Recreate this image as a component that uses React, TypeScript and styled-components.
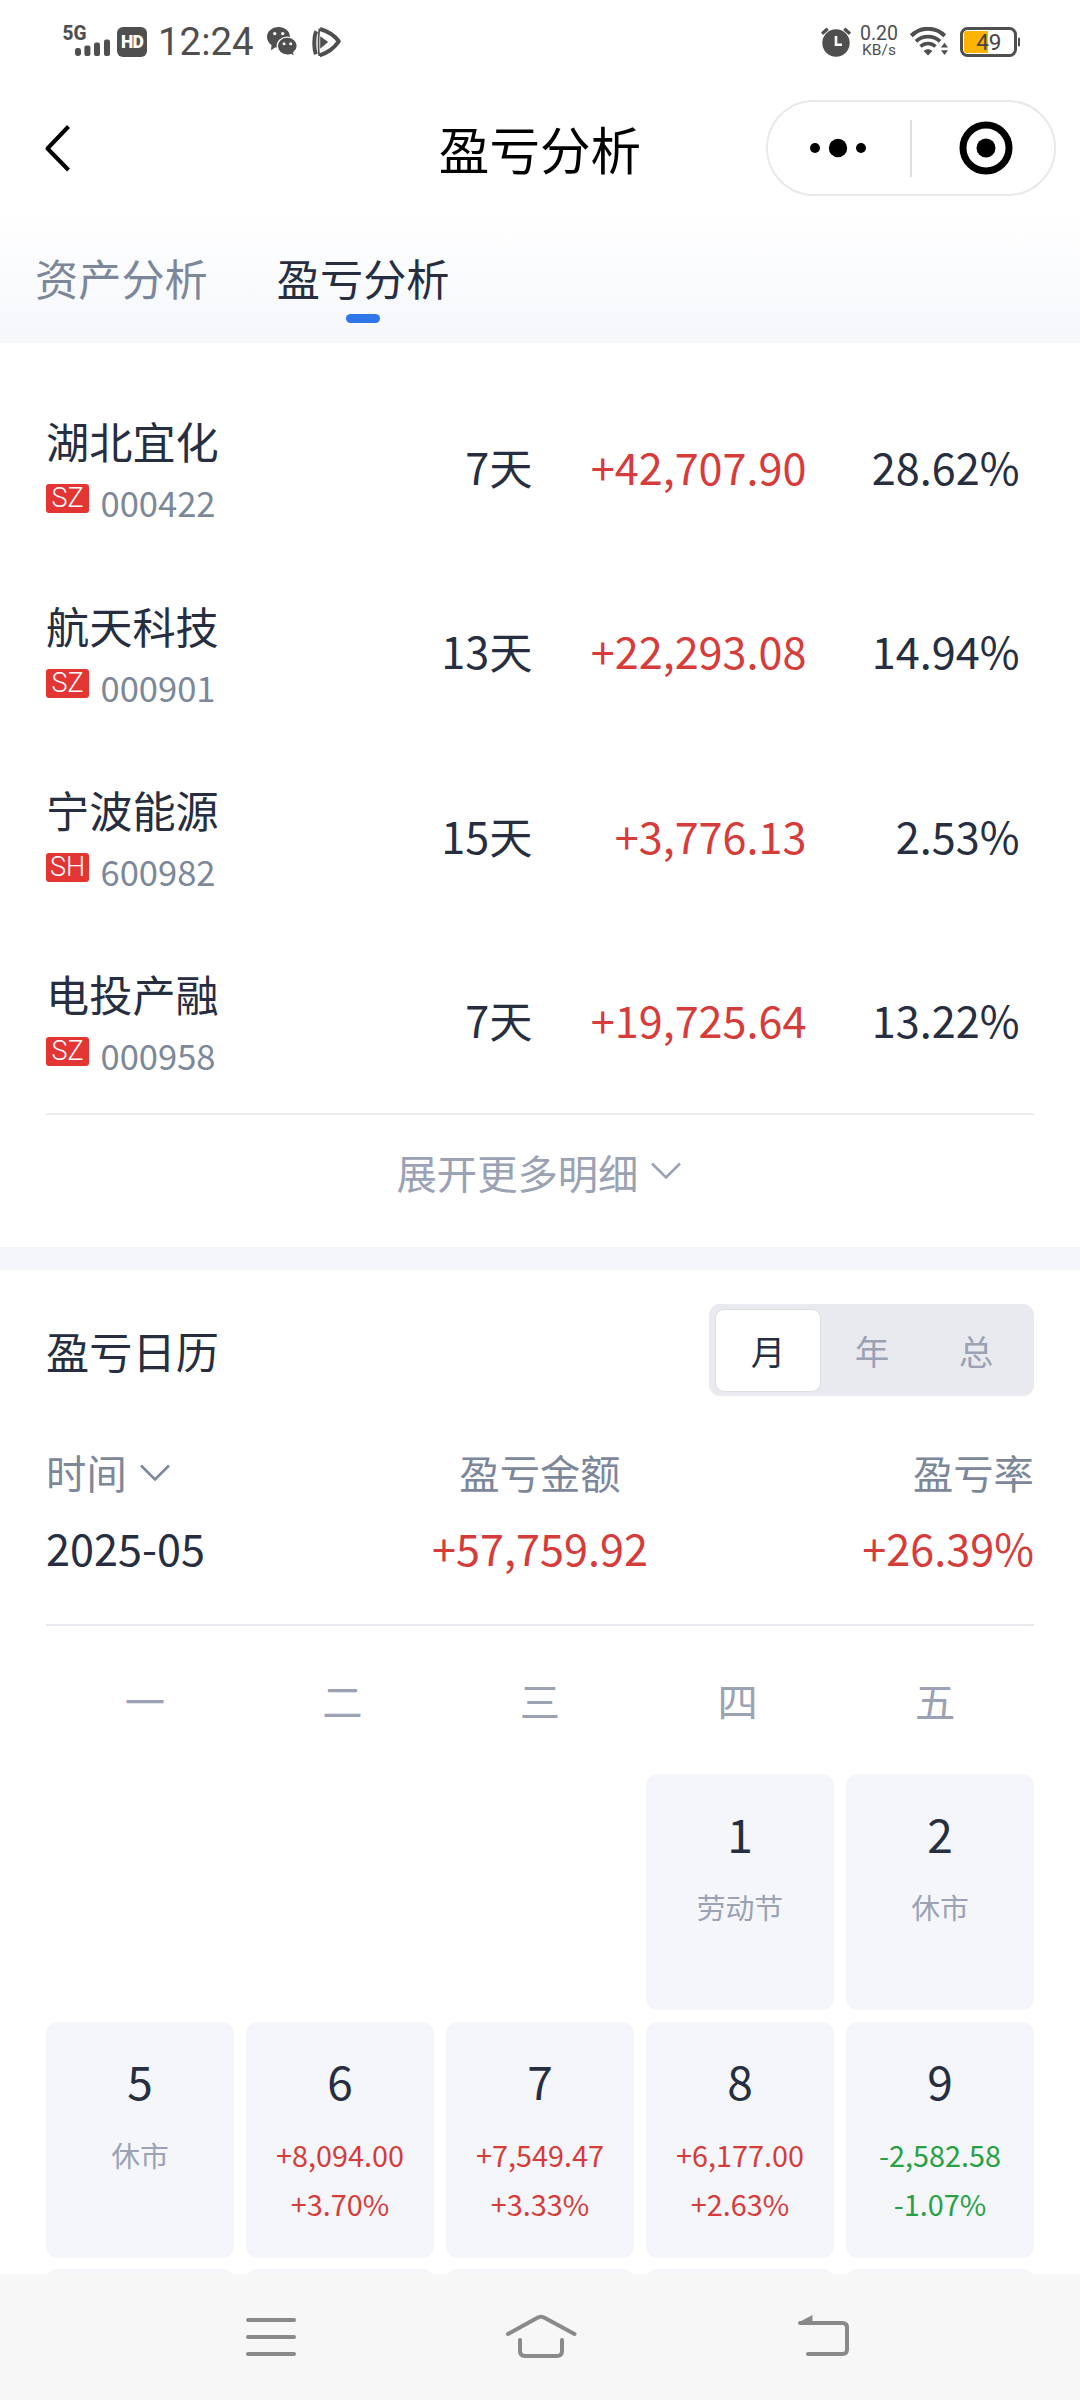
import React from 'react';
import styled, { createGlobalStyle } from 'styled-components';

const INK = '#262e3f';
const SLATE = '#7d879a';
const MUTED = '#9aa2b4';
const UP = '#d53c3a';
const DOWN = '#26a144';
const STATUS = '#4f4f4f';

const GlobalStyle = createGlobalStyle`
  html, body { margin: 0; padding: 0; background: #fff; }
  * { box-sizing: border-box; }
  body { font-family: "Noto Sans CJK SC", "Noto Sans", sans-serif; font-weight: 400; color: ${INK}; }
`;

const Screen = styled.div`
  width: 1080px;
  height: 2400px;
  display: flex;
  flex-direction: column;
  overflow: hidden;
  background: #fff;
`;

const StatusBar = styled.header`
  flex: none;
  height: 84px;
  padding: 0 60px 0 60px;
  display: flex;
  justify-content: space-between;
  align-items: center;
  font-family: Roboto, "Liberation Sans", sans-serif;
  color: ${STATUS};
  svg { display: block; font-family: Roboto, "Liberation Sans", sans-serif; }
`;

const StatusGroup = styled.div<{ $offset?: number }>`
  display: flex;
  align-items: center;
  margin-left: ${(p) => p.$offset ?? 0}px;
`;

const HdBadge = styled.span`
  width: 30px;
  height: 30px;
  margin-left: 7px;
  border-radius: 6px;
  background: ${STATUS};
  color: #fff;
  font-size: 17.5px;
  font-weight: 900;
  line-height: 31px;
  text-align: center;
  letter-spacing: -0.8px;
`;

const Clock = styled.time`
  margin: 0 12px 0 11px;
  width: 97px;
  font-size: 38.4px;
  line-height: 38px;
`;

const NetSpeed = styled.div`
  width: 38px;
  margin: 0 12px 0 8px;
  display: flex;
  flex-direction: column;
  align-items: center;
`;

const SpeedValue = styled.span`
  font-size: 19.5px;
  line-height: 16px;
`;

const SpeedUnit = styled.span`
  font-size: 15.5px;
  line-height: 17px;
`;

const TitleBar = styled.div`
  flex: none;
  height: 128px;
  padding: 0 24px 0 44px;
  display: grid;
  grid-template-columns: 1fr auto 1fr;
  align-items: center;
`;

const PageTitle = styled.h1`
  margin: 0;
  padding-right: 20px;
  font-size: 50.6px;
  line-height: 70px;
  font-weight: 400;
  color: #000;
`;

const Capsule = styled.div`
  justify-self: end;
  width: 290px;
  height: 96px;
  border: 2px solid #e9e9e9;
  border-radius: 48px;
  display: grid;
  grid-template-columns: 142px 2px 142px;
  align-items: center;
`;

const CapsuleButton = styled.button<{ $shift: string }>`
  height: 100%;
  padding: ${(p) => p.$shift};
  border: 0;
  background: none;
  display: flex;
  align-items: center;
  justify-content: center;
`;

const CapsuleDivider = styled.span`
  width: 2px;
  height: 57px;
  background: #dedede;
`;

const BackButton = styled.button`
  justify-self: start;
  padding: 0;
  border: 0;
  background: none;
  display: flex;
`;

const Tabs = styled.nav`
  flex: none;
  height: 131px;
  padding: 34.5px 35px 0;
  display: flex;
  gap: 69px;
  background: linear-gradient(#ffffff, #f5f7fb);
`;

const Tab = styled.div<{ $active?: boolean }>`
  display: flex;
  flex-direction: column;
  align-items: center;
  font-size: 43.2px;
  line-height: 60px;
  color: ${(p) => (p.$active ? INK : SLATE)};
  &::after {
    content: "";
    width: 34px;
    height: 9px;
    margin-top: 7.5px;
    border-radius: 4.5px;
    background: ${(p) => (p.$active ? '#2f76e8' : 'transparent')};
  }
`;

const Body = styled.main`
  flex: 1;
  min-height: 0;
  overflow: hidden;
`;

const Holdings = styled.section`
  height: 904px;
  padding: 31.4px 46px 0;
`;

const HoldingRow = styled.div`
  height: 184.32px;
  display: grid;
  grid-template-columns: 240px 246.5px 274px 213px;
  align-items: start;
`;

const Stock = styled.div`
  padding-top: 36px;
`;

const StockName = styled.div`
  font-size: 43.2px;
  line-height: 60px;
`;

const StockMeta = styled.div`
  height: 64px;
  display: flex;
  align-items: center;
`;

const MarketTag = styled.span`
  width: 43px;
  height: 29px;
  margin: 0 11.5px 7px 0;
  border-radius: 3px;
  background: #e33534;
  color: #fff;
  font-family: Roboto, "Liberation Sans", sans-serif;
  font-size: 27px;
  font-weight: 350;
  line-height: 29px;
  text-align: center;
`;

const StockCode = styled.span`
  font-size: 34.56px;
  line-height: 50px;
  color: ${SLATE};
`;

const Figure = styled.div<{ $color?: string }>`
  padding-top: 61.6px;
  text-align: right;
  font-size: 43.2px;
  line-height: 60px;
  color: ${(p) => p.$color ?? INK};
`;

const Rule = styled.div<{ $color: string; $gap?: number }>`
  height: 2px;
  margin-top: ${(p) => p.$gap ?? 0}px;
  background: ${(p) => p.$color};
`;

const ExpandButton = styled.div`
  padding-top: 29px;
  display: flex;
  justify-content: center;
  align-items: flex-start;
  gap: 13px;
  padding-right: 2px;
  font-size: 40.32px;
  line-height: 56px;
  color: ${MUTED};
  svg { margin-top: 18.5px; }
`;

const Band = styled.div`
  height: 23px;
  background: #f4f6fa;
`;

const CalendarSection = styled.section`
  padding: 34px 46.08px 0;
`;

const SectionHead = styled.div`
  display: flex;
  justify-content: space-between;
  align-items: center;
`;

const SectionTitle = styled.h2`
  margin: 0;
  font-size: 43.2px;
  line-height: 60px;
  font-weight: 400;
`;

const Segmented = styled.div`
  width: 325px;
  height: 92px;
  padding: 5.5px 6px 5.5px 7px;
  border-radius: 11px;
  background: #e9eaf0;
  display: flex;
`;

const Segment = styled.span<{ $active?: boolean }>`
  flex: 1;
  height: 81px;
  border-radius: 8px;
  background: ${(p) => (p.$active ? '#fff' : 'transparent')};
  box-shadow: ${(p) => (p.$active ? '0 0 0 1px #dddee4' : 'none')};
  color: ${(p) => (p.$active ? INK : MUTED)};
  font-size: 34.56px;
  line-height: 81px;
  text-align: center;
`;

const Summary = styled.div`
  margin: 47.6px 0 46.8px;
  display: grid;
  grid-template-columns: 1fr 1fr 1fr;
  row-gap: 17.6px;
`;

const SummaryLabel = styled.div<{ $align: string }>`
  display: flex;
  justify-content: ${(p) => p.$align};
  gap: 13px;
  font-size: 40.32px;
  line-height: 56px;
  color: ${SLATE};
  svg { margin-top: 20px; }
`;

const SummaryValue = styled.div<{ $align: string; $color?: string }>`
  display: flex;
  justify-content: ${(p) => p.$align};
  font-size: 43.2px;
  line-height: 60px;
  color: ${(p) => p.$color ?? INK};
`;

const Weekdays = styled.div`
  margin: 46px 0 46px;
  display: grid;
  grid-template-columns: repeat(5, 1fr);
  text-align: center;
  font-size: 40.32px;
  line-height: 56px;
  color: ${MUTED};
`;

const DayGrid = styled.div`
  display: grid;
  grid-template-columns: repeat(5, 1fr);
  grid-auto-rows: 236.16px;
  gap: 11.52px 12px;
`;

const DayCard = styled.div<{ $blank?: boolean }>`
  padding-top: 26.8px;
  border-radius: 11.5px;
  background: ${(p) => (p.$blank ? 'transparent' : '#f4f6fa')};
  display: flex;
  flex-direction: column;
  align-items: center;
`;

const DayNumber = styled.span`
  margin-bottom: 17.7px;
  font-size: 46.08px;
  line-height: 64px;
`;

const DayLine = styled.span<{ $color: string }>`
  font-size: 28.8px;
  line-height: 49px;
  color: ${(p) => p.$color};
`;

const SystemNav = styled.footer`
  flex: none;
  height: 126px;
  padding: 38px 0 0 246px;
  background: #f7f7f7;
  display: grid;
  grid-template-columns: 260px 292px 1fr;
  svg { display: block; }
`;

const Chevron = ({ color }: { color: string }) => (
  <svg width="30" height="19" viewBox="0 0 30 19" fill="none" stroke={color} strokeWidth="2.6">
    <path d="M1 1.5 15 15.5 29 1.5" />
  </svg>
);

const SignalIcon = () => (
  <svg width="50" height="48" viewBox="0 -6 50 48" fill={STATUS}>
    <text x="2.500" y="16" fontSize="20" fontWeight="800" textLength="24" lengthAdjust="spacingAndGlyphs">5G</text>
    <rect x="15" y="24" width="6" height="8" rx="2.4" />
    <rect x="24.4" y="21.500" width="6" height="10.500" rx="2" />
    <rect x="34" y="18.500" width="6" height="13.500" rx="2" />
    <rect x="44" y="15.500" width="6" height="16.500" rx="2" />
  </svg>
);

const WechatIcon = () => (
  <svg width="30" height="31" viewBox="0 0 30 31" fill={STATUS}>
    <path d="M11.5 0C5 0 0 4.4 0 10c0 3.300 1.800 6.100 4.500 8L4 23.300 8.600 20.200c5.900 1.300 14.400-1.500 14.400-10.200C23 4.400 18 0 11.500 0Z" />
    <path d="M20.300 10.200c-5.600 0-10 3.900-10 8.900s4.400 9 10 9c1.400 0 2.600-.2 3.700-.6l3.300 2.200-.5-4.200c2.200-1.700 3.500-3.900 3.500-6.400 0-5-4.400-8.900-10-8.900Z" stroke="#fff" strokeWidth="1.300" />
    <g fill="#fff">
      <circle cx="7.700" cy="6.600" r="1.700" />
      <circle cx="15.700" cy="6.600" r="1.700" />
      <circle cx="17.100" cy="16.800" r="1.500" />
      <circle cx="23.700" cy="16.800" r="1.500" />
    </g>
  </svg>
);

const PlayerIcon = () => (
  <svg width="30" height="31" viewBox="0 0 30 31" fill="none" stroke={STATUS}>
    <path d="M4.400 4.200C1.700 8.500 1.700 22 4 27.200" strokeWidth="4" />
    <path d="M8 2C15 4 22.500 8.500 26.800 14.300 22.500 20.500 15 26 7.600 28.300" strokeWidth="4" strokeLinejoin="round" />
    <path d="M7.600 1.500C6.300 8 6.200 22 7.200 29" strokeWidth="1.700" />
    <path d="M8.200 9.300v12.400l8-6.600Z" fill={STATUS} stroke="none" />
  </svg>
);

const AlarmIcon = () => (
  <svg width="31" height="30" viewBox="0 0 31 30" fill="none" stroke={STATUS}>
    <circle cx="15" cy="16" r="13.700" fill={STATUS} stroke="none" />
    <path d="M1 6.700 6.700 1.800M29 6.700 23.300 1.800" strokeWidth="3.200" />
    <path d="M15 9v8.800h6" stroke="#fff" strokeWidth="2.600" />
  </svg>
);

const WifiIcon = () => (
  <svg width="39" height="30" viewBox="0 0 39 30" fill="none" stroke={STATUS}>
    <path d="M1.300 8.800C10.500-.6 25.500-.6 34.700 8.800" strokeWidth="4" />
    <path d="M6 14.300c6.600-6.300 17.400-6.300 24 0" strokeWidth="3.800" />
    <path d="M10.500 19.500c4.300-4 10.700-4 15 0" strokeWidth="3.600" />
    <path d="M13.700 24c2.600-2.200 6-2.200 8.600 0L18 28.500Z" fill={STATUS} stroke="none" />
    <path d="m31 20.500 3.500-4.700 3.500 4.700ZM31 23.300l3.500 4.700 3.500-4.700Z" fill={STATUS} stroke="none" />
  </svg>
);

const BatteryIcon = () => (
  <svg width="60" height="30" viewBox="0 0 60 30">
    <rect x="1.500" y="1.500" width="54" height="27" rx="6" fill="#fff" stroke={STATUS} strokeWidth="3" />
    <path d="M4 6.500A2.500 2.500 0 0 1 6.500 4H28v22H6.500A2.500 2.500 0 0 1 4 23.500Z" fill="#fdb400" />
    <rect x="58" y="10.500" width="2" height="9" rx="1" fill={STATUS} />
    <text x="28.800" y="23" fontSize="22.500" textAnchor="middle" fill="#444">49</text>
  </svg>
);

type Holding = { name: string; market: string; code: string; days: string; profit: string; rate: string };

const holdings: Holding[] = [
  { name: '湖北宜化', market: 'SZ', code: '000422', days: '7天', profit: '+42,707.90', rate: '28.62%' },
  { name: '航天科技', market: 'SZ', code: '000901', days: '13天', profit: '+22,293.08', rate: '14.94%' },
  { name: '宁波能源', market: 'SH', code: '600982', days: '15天', profit: '+3,776.13', rate: '2.53%' },
  { name: '电投产融', market: 'SZ', code: '000958', days: '7天', profit: '+19,725.64', rate: '13.22%' },
];

type Day = { day?: number; note?: string; amount?: string; rate?: string };

const days: Day[] = [
  {}, {}, {},
  { day: 1, note: '劳动节' },
  { day: 2, note: '休市' },
  { day: 5, note: '休市' },
  { day: 6, amount: '+8,094.00', rate: '+3.70%' },
  { day: 7, amount: '+7,549.47', rate: '+3.33%' },
  { day: 8, amount: '+6,177.00', rate: '+2.63%' },
  { day: 9, amount: '-2,582.58', rate: '-1.07%' },
];

const CalendarDay = ({ day, note, amount, rate }: Day) => {
  if (!day) return <DayCard $blank />;
  const color = amount?.startsWith('-') ? DOWN : UP;
  return (
    <DayCard>
      <DayNumber>{day}</DayNumber>
      {note && <DayLine $color={MUTED}>{note}</DayLine>}
      {amount && <DayLine $color={color}>{amount}</DayLine>}
      {rate && <DayLine $color={color}>{rate}</DayLine>}
    </DayCard>
  );
};

export default function App() {
  return (
    <Screen>
      <GlobalStyle />
      <StatusBar>
        <StatusGroup>
          <SignalIcon />
          <HdBadge>HD</HdBadge>
          <Clock>12:24</Clock>
          <WechatIcon />
          <StatusGroup $offset={15}><PlayerIcon /></StatusGroup>
        </StatusGroup>
        <StatusGroup>
          <AlarmIcon />
          <NetSpeed>
            <SpeedValue>0.20</SpeedValue>
            <SpeedUnit>KB/s</SpeedUnit>
          </NetSpeed>
          <WifiIcon />
          <StatusGroup $offset={11}><BatteryIcon /></StatusGroup>
        </StatusGroup>
      </StatusBar>

      <TitleBar>
        <BackButton aria-label="返回">
          <svg width="28" height="48" viewBox="0 0 28 48" fill="none" stroke="#000" strokeWidth="4" strokeLinejoin="round">
            <path d="M24.500 2.500 3.500 24.500 24.500 46" />
          </svg>
        </BackButton>
        <PageTitle>盈亏分析</PageTitle>
        <Capsule>
          <CapsuleButton aria-label="更多" $shift="0 2px 0 0">
            <svg width="56" height="20" viewBox="0 0 56 20">
              <circle cx="5" cy="10" r="5" />
              <circle cx="28" cy="10" r="9.200" />
              <circle cx="51" cy="10" r="5" />
            </svg>
          </CapsuleButton>
          <CapsuleDivider />
          <CapsuleButton aria-label="关闭" $shift="0 0 0 6px">
            <svg width="54" height="54" viewBox="0 0 54 54">
              <circle cx="27" cy="27" r="23" fill="none" stroke="#000" strokeWidth="7" />
              <circle cx="27" cy="27" r="9.500" />
            </svg>
          </CapsuleButton>
        </Capsule>
      </TitleBar>

      <Tabs>
        <Tab>资产分析</Tab>
        <Tab $active>盈亏分析</Tab>
      </Tabs>

      <Body>
        <Holdings>
          {holdings.map((h) => (
            <HoldingRow key={h.code}>
              <Stock>
                <StockName>{h.name}</StockName>
                <StockMeta>
                  <MarketTag>{h.market}</MarketTag>
                  <StockCode>{h.code}</StockCode>
                </StockMeta>
              </Stock>
              <Figure>{h.days}</Figure>
              <Figure $color={UP}>{h.profit}</Figure>
              <Figure>{h.rate}</Figure>
            </HoldingRow>
          ))}
          <Rule $color="#ebecee" $gap={1.3} />
          <ExpandButton>
            展开更多明细
            <Chevron color={MUTED} />
          </ExpandButton>
        </Holdings>
        <Band />
        <CalendarSection>
          <SectionHead>
            <SectionTitle>盈亏日历</SectionTitle>
            <Segmented>
              <Segment $active>月</Segment>
              <Segment>年</Segment>
              <Segment>总</Segment>
            </Segmented>
          </SectionHead>
          <Summary>
            <SummaryLabel $align="flex-start">时间<Chevron color={SLATE} /></SummaryLabel>
            <SummaryLabel $align="center">盈亏金额</SummaryLabel>
            <SummaryLabel $align="flex-end">盈亏率</SummaryLabel>
            <SummaryValue $align="flex-start">2025-05</SummaryValue>
            <SummaryValue $align="center" $color={UP}>+57,759.92</SummaryValue>
            <SummaryValue $align="flex-end" $color={UP}>+26.39%</SummaryValue>
          </Summary>
          <Rule $color="#e8e9ef" />
          <Weekdays>
            {['一', '二', '三', '四', '五'].map((d) => <span key={d}>{d}</span>)}
          </Weekdays>
          <DayGrid>
            {days.map((d, i) => <CalendarDay key={i} {...d} />)}
            {[0, 1, 2, 3, 4].map((i) => <DayCard key={`next-${i}`} />)}
          </DayGrid>
        </CalendarSection>
      </Body>

      <SystemNav>
        <svg width="52" height="48" viewBox="0 0 52 48" fill="none" stroke="#8a8a8a" strokeWidth="4" strokeLinecap="round">
          <path d="M2 8h46M2 25h46M2 42h46" />
        </svg>
        <svg width="72" height="48" viewBox="0 0 72 48" fill="none" stroke="#8a8a8a" strokeWidth="4" strokeLinecap="round" strokeLinejoin="round">
          <path d="M2 22 31 6Q35 3.500 39 6L68.500 22" />
          <path d="M14 28v11q0 5 5 5h32q5 0 5-5V28" />
        </svg>
        <svg width="54" height="48" viewBox="0 0 54 48" fill="none" stroke="#8a8a8a" strokeWidth="4" strokeLinecap="round">
          <path d="M2 11H44.500q4.500 0 4.500 4.500v22q0 4.500-4.500 4.500H10" />
          <path d="M.8 10.200 14.500 3v8Z" fill="#8a8a8a" stroke="none" />
        </svg>
      </SystemNav>
    </Screen>
  );
}
